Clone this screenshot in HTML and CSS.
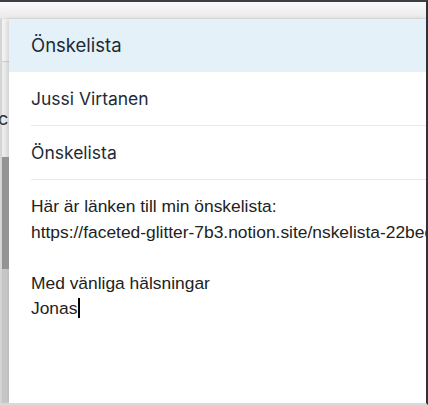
FILE: index.html
```html
<!DOCTYPE html>
<html lang="sv">
<head>
<meta charset="utf-8">
<title>Önskelista</title>
<link rel="stylesheet" href="styles.css">
</head>
<body>
<div class="screen">
  <div class="backdrop">
    <div class="topbar"></div>
    <div class="side">
      <div class="side-a"></div>
      <div class="side-b"><span class="side-c">c</span></div>
      <div class="side-d"></div>
      <div class="side-e"></div>
    </div>
  </div>
  <div class="dialog">
    <div class="header">Önskelista</div>
    <div class="row"><span>Jussi Virtanen</span></div>
    <div class="row"><span>Önskelista</span></div>
    <div class="body">
      <p class="line">Här är länken till min önskelista:</p>
      <p class="line">https://faceted-glitter-7b3.notion.site/nskelista-22bed3e8d5a44f0c</p>
      <p class="line">&nbsp;</p>
      <p class="line">Med vänliga hälsningar</p>
      <p class="line">Jonas<span class="caret"></span></p>
    </div>
  </div>
</div>
</body>
</html>
```

FILE: styles.css
```css
* { box-sizing: border-box; }
html, body { margin: 0; padding: 0; }
body { width: 428px; height: 405px; overflow: hidden; background: #fff; }

.screen {
  position: relative;
  width: 428px;
  height: 405px;
  border-top: 2px solid #3b4046;
  border-right: 2px solid #2f3337;
  border-bottom: 2px solid #d9d9d9;
  overflow: hidden;
  background: #f4f4f4;
}

.backdrop { display: flex; flex-direction: column; height: 100%; }
.topbar {
  height: 17px;
  background: linear-gradient(#fbfbfb, #eaeaea);
  border-bottom: 1px solid #e0e0e0;
}
.side {
  flex: 1;
  width: 10px;
  display: flex;
  flex-direction: column;
  border-left: 2px solid #d5d5d5;
}
.side-a { height: 43px; background: #f2f2f2; border-bottom: 1px solid #cfcfcf; }
.side-b { height: 95px; background: #ececec; position: relative; font-family: "Inter", sans-serif; font-size: 18px; color: #333; }
.side-c { position: absolute; left: -4px; top: 46px; }
.side-d { height: 112px; background: linear-gradient(90deg, #8f8f8f, #a6a6a6); }
.side-e { flex: 1; background: linear-gradient(90deg, #c4c4c4, #d6d6d6); }

.dialog {
  position: absolute;
  left: 9px;
  top: 17px;
  right: 0;
  bottom: 0;
  background: #fff;
  box-shadow: -2px 0 4px rgba(0,0,0,0.12);
  font-family: "Inter", "Noto Sans", sans-serif;
  color: #1d2a36;
}

.header {
  height: 53px;
  background: #e5f1f8;
  padding-left: 22px;
  font-size: 18.5px;
  display: flex;
  align-items: center;
  padding-bottom: 2px;
}

.row {
  height: 54px;
  margin-left: 22px;
  border-bottom: 1px solid #e5e8ec;
  font-size: 17.5px;
  display: flex;
  align-items: center;
}

.body {
  padding: 14px 0 0 22px;
  font-family: "Liberation Sans", Arial, sans-serif;
  font-size: 17.4px;
  color: #222;
}
.line { margin: 0; line-height: 25.5px; white-space: nowrap; }
.caret {
  display: inline-block;
  width: 2px;
  height: 20px;
  background: #000;
  vertical-align: -4px;
  margin-left: 1px;
}
```
